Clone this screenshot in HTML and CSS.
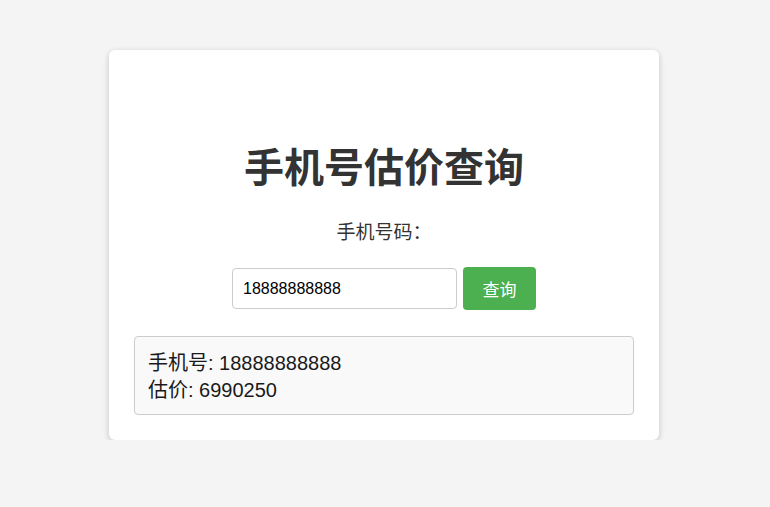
FILE: index.html
```html
<!DOCTYPE html>
<html lang="zh">
<head>
<meta charset="utf-8">
<title>手机号估价查询</title>
<link rel="stylesheet" href="styles.css">
</head>
<body>
<div class="card">
  <h1 class="title">手机号估价查询</h1>
  <label class="label" for="phone">手机号码：</label>
  <div class="form-row">
    <input id="phone" class="input" type="text" value="18888888888">
    <button class="btn" type="button">查询</button>
  </div>
  <div class="result">
    <div>手机号: 18888888888</div>
    <div>估价: 6990250</div>
  </div>
</div>
</body>
</html>
```

FILE: styles.css
```css
html, body {
  margin: 0;
  padding: 0;
}
body {
  background: #f4f4f4;
  font-family: "Liberation Sans", "Noto Sans CJK SC", sans-serif;
  color: #333;
}
.card {
  width: 500px;
  margin: 50px auto 0;
  padding: 91px 25px 25px;
  background: #fff;
  border-radius: 6px;
  box-shadow: 0 2px 6px rgba(0, 0, 0, 0.2);
  display: flex;
  flex-direction: column;
  align-items: center;
  position: relative;
  left: -1px;
}
.title {
  margin: 0;
  font-family: "Noto Sans CJK SC", sans-serif;
  font-size: 40px;
  font-weight: 700;
  line-height: 48px;
  color: #333;
}
.label {
  margin-top: 28px;
  font-family: "Noto Sans CJK SC", sans-serif;
  font-size: 19px;
  font-weight: 400;
  line-height: 27px;
  color: #333;
}
.form-row {
  margin-top: 23px;
  display: flex;
  align-items: center;
  gap: 6px;
}
.input {
  box-sizing: border-box;
  width: 225px;
  height: 41px;
  padding: 0 10px;
  border: 1px solid #ccc;
  border-radius: 4px;
  font-family: "Liberation Sans", sans-serif;
  font-size: 16px;
  color: #000;
  outline: none;
}
.btn {
  box-sizing: border-box;
  width: 73px;
  height: 43px;
  border: none;
  border-radius: 4px;
  background: #4caf50;
  color: #fff;
  font-family: "Noto Sans CJK SC", sans-serif;
  font-size: 17px;
  cursor: pointer;
}
.result {
  box-sizing: border-box;
  align-self: stretch;
  margin-top: 26px;
  padding: 13px 13px 10px;
  background: #f9f9f9;
  border: 1px solid #ccc;
  border-radius: 4px;
  font-size: 20px;
  line-height: 27px;
  color: #1a1a1a;
}
```
